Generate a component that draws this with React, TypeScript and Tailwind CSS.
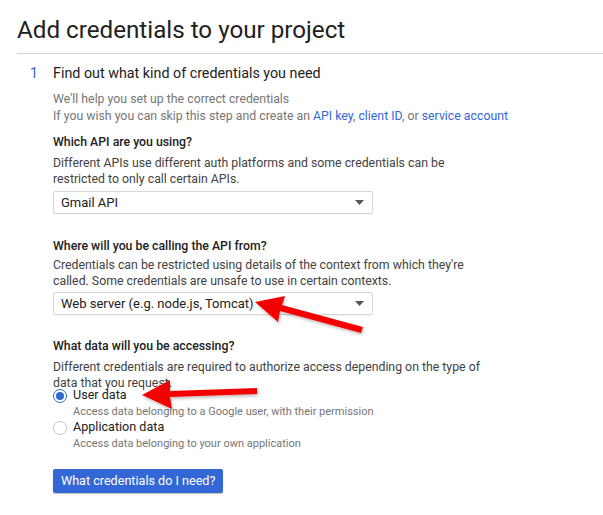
import React from 'react';

const Select: React.FC<{ value: string }> = ({ value }) => (
  <div className="w-[320px] h-[23px] border border-[#d6d6d6] rounded-[2px] flex items-center justify-between pl-[7px] pr-[8px] text-[13px] text-[#212121] shadow-[0_1px_0_rgba(0,0,0,0.04)]">
    <span>{value}</span>
    <svg width="9" height="5" viewBox="0 0 9 5">
      <path d="M0 0 L9 0 L4.5 5 Z" fill="#555" />
    </svg>
  </div>
);

const Radio: React.FC<{ checked?: boolean; label: string; hint: string }> = ({ checked, label, hint }) => (
  <div>
    <div className="flex items-center h-[17px]">
      <span
        className={
          checked
            ? 'w-[14px] h-[14px] rounded-full border border-[#3367d6] flex items-center justify-center'
            : 'w-[14px] h-[14px] rounded-full border border-[#c8c8c8]'
        }
      >
        {checked && <span className="w-[8px] h-[8px] rounded-full bg-[#3367d6]" />}
      </span>
      <span className="ml-[6px] text-[12.6px] text-[#212121]">{label}</span>
    </div>
    <p className="pl-[20px] text-[11px] leading-[15px] text-[#757575]">{hint}</p>
  </div>
);

const App: React.FC = () => {
  return (
    <div className="relative w-[603px] h-[515px] overflow-hidden bg-white font-['Roboto',sans-serif]">
      <h1 className="pl-[17px] pt-[15px] text-[24.2px] leading-[30px] text-[#212121]">
        Add credentials to your project
      </h1>
      <div className="ml-[17px] mt-[8px] border-t border-[#d0d0d0]" />

      <div className="mt-[11px] flex items-center h-[18px] text-[14.3px] text-[#212121]">
        <span className="w-[53px] pl-[30px] text-[#3367d6]">1</span>
        <span>Find out what kind of credentials you need</span>
      </div>

      <div className="ml-[53px]">
        <div className="mt-[8px] text-[12.3px] leading-[17px] text-[#757575]">
          <p>We'll help you set up the correct credentials</p>
          <p>
            If you wish you can skip this step and create an <span className="text-[#3367d6]">API key</span>,{' '}
            <span className="text-[#3367d6]">client ID</span>, or{' '}
            <span className="text-[#3367d6]">service account</span>
          </p>
        </div>

        <h3 className="mt-[9px] text-[12.3px] leading-[17px] font-medium text-[#212121]">Which API are you using?</h3>
        <p className="mt-[4px] w-[440px] text-[12.3px] leading-[16px] text-[#424242]">
          Different APIs use different auth platforms and some credentials can be restricted to only call certain APIs.
        </p>
        <div className="mt-[4px]">
          <Select value="Gmail API" />
        </div>

        <h3 className="mt-[24px] text-[12.3px] leading-[17px] font-medium text-[#212121]">
          Where will you be calling the API from?
        </h3>
        <p className="mt-[2px] w-[440px] text-[12.3px] leading-[16px] text-[#424242]">
          Credentials can be restricted using details of the context from which they're called. Some credentials are
          unsafe to use in certain contexts.
        </p>
        <div className="mt-[3px]">
          <Select value="Web server (e.g. node.js, Tomcat)" />
        </div>

        <h3 className="mt-[23px] text-[12.3px] leading-[17px] font-medium text-[#212121]">
          What data will you be accessing?
        </h3>
        <p className="mt-[4px] w-[440px] text-[12.3px] leading-[16px] text-[#424242]">
          Different credentials are required to authorize access depending on the type of data that you request.
        </p>
        <div className="-mt-[4px]">
          <Radio checked label="User data" hint="Access data belonging to a Google user, with their permission" />
          <Radio label="Application data" hint="Access data belonging to your own application" />
        </div>

        <button className="mt-[18px] h-[24px] px-[8px] rounded-[2px] bg-[#3367d6] text-[12.6px] text-white shadow-[0_1px_1px_rgba(0,0,0,0.25)]">
          What credentials do I need?
        </button>
      </div>

      {/* annotation arrows */}
      <svg className="absolute left-0 top-0 pointer-events-none" width="603" height="515">
        <defs>
          <filter id="sh" x="-10%" y="-10%" width="120%" height="140%">
            <feDropShadow dx="1" dy="2" stdDeviation="1.5" floodColor="#000" floodOpacity="0.25" />
          </filter>
        </defs>
        <g fill="#f50000" filter="url(#sh)">
          <path d="M255 302 L285 296 L282 305 L363 327 L361 333 L280 311 L278 322 Z" />
          <path d="M142 395 L170 380 L170 391 L257 388 L257 394 L170 397 L172 409 Z" />
        </g>
      </svg>
    </div>
  );
};

export default App;
